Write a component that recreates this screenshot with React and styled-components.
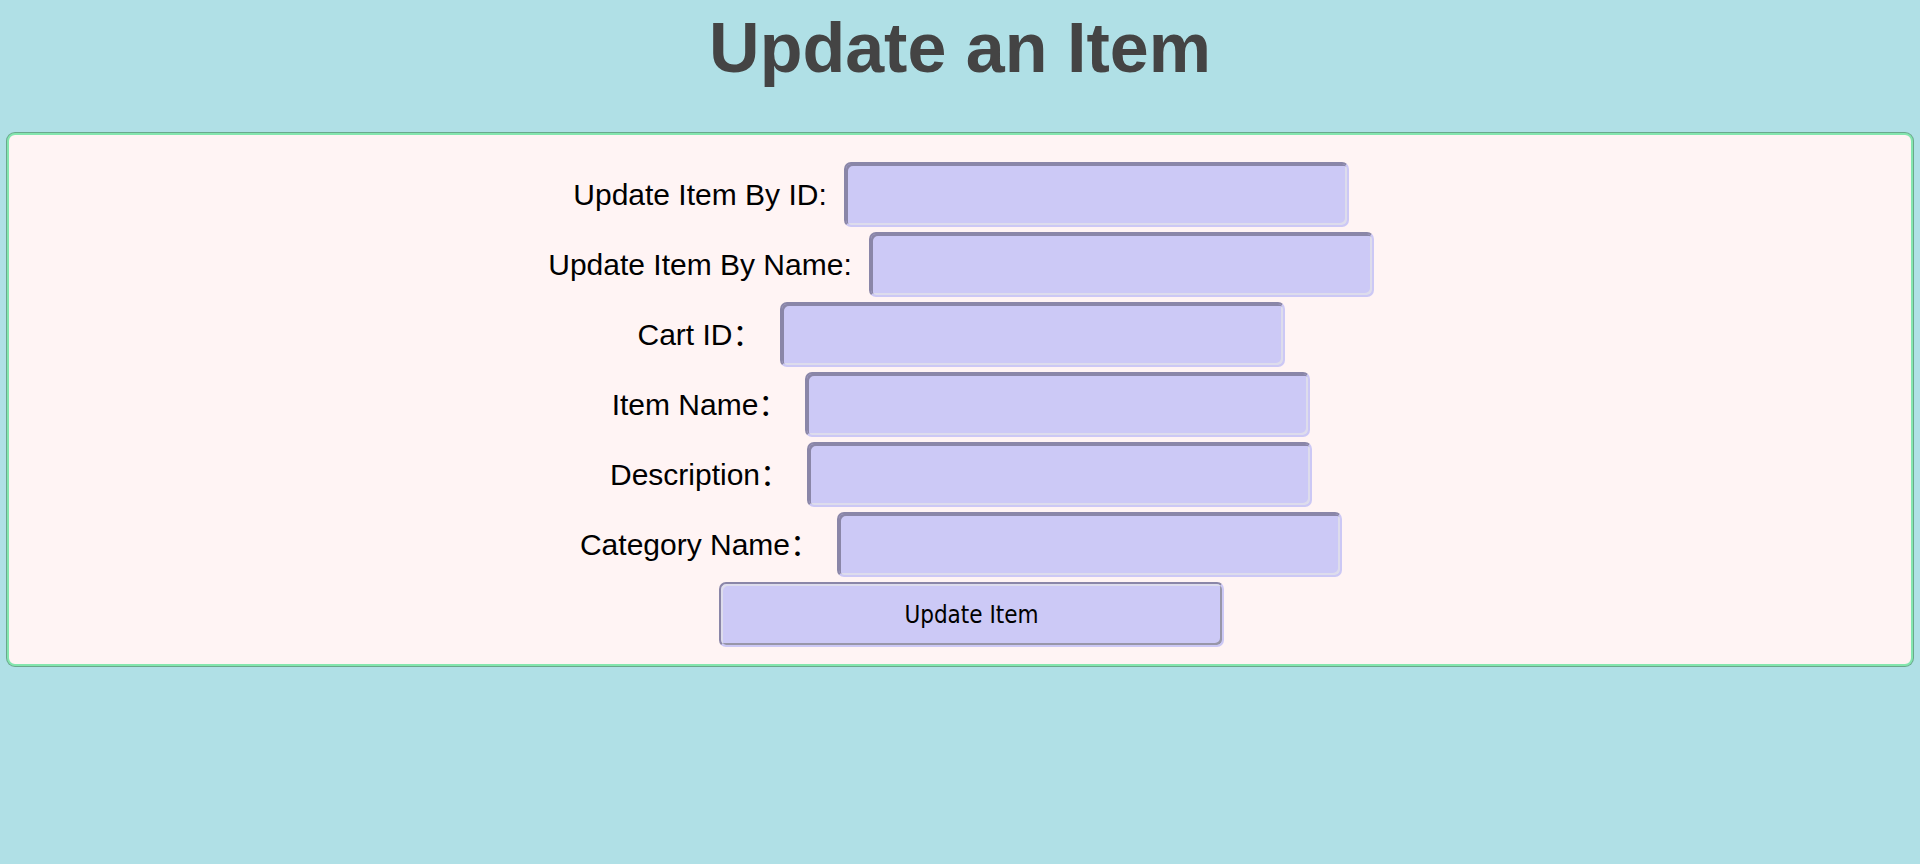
import React, { useState } from "react";
import styled, { createGlobalStyle } from "styled-components";

const GlobalStyle = createGlobalStyle`
  html, body {
    margin: 0;
    padding: 0;
    background: #b0e0e6;
  }
  body {
    font-family: "Liberation Sans", Arial, sans-serif;
  }
`;

const Page = styled.div`
  min-height: 864px;
  padding: 8px 7px 0 7px;
  box-sizing: border-box;
`;

const Title = styled.h1`
  margin: 0 0 45px;
  height: 80px;
  line-height: 80px;
  text-align: center;
  font-size: 70px;
  font-weight: bold;
  color: #444444;
`;

const Panel = styled.form`
  background: #fff4f4;
  border: 2px solid #84e6ae;
  border-radius: 8px;
  box-shadow: 0 0 0 1px #6aa88c;
  padding: 27px 0 17px 2px;
  display: flex;
  flex-direction: column;
  gap: 5px;
`;

const Row = styled.div`
  display: flex;
  justify-content: center;
  align-items: center;
  gap: 17px;
`;

const Label = styled.label`
  font-family: "Liberation Sans", "Noto Sans CJK SC", sans-serif;
  font-size: 30px;
  line-height: 34px;
  color: #000;
  white-space: nowrap;
`;

const ring = `
  width: 505px;
  height: 65px;
  box-sizing: border-box;
  border: 2px solid;
  border-color: #8a86a8 #ccc8f5 #ccc8f5 #8a86a8;
  border-radius: 7px;
  background: #ccc9f6;
  outline: none;
`;

const Field = styled.input`
  ${ring}
  box-shadow: inset 2px 2px 0 #8a86a8, inset -2px -2px 0 #dddcec;
  padding: 0 10px;
  font-size: 24px;
  font-family: "Liberation Sans", sans-serif;
`;

const SubmitButton = styled.button`
  ${ring}
  box-shadow: inset 2px 2px 0 #dddcec, inset -2px -2px 0 #9896a8;
  margin-left: 21px;
  font-family: "DejaVu Sans Condensed", "DejaVu Sans", sans-serif;
  font-stretch: condensed;
  font-size: 24px;
  color: #000;
  cursor: pointer;
`;

const fields = [
  { key: "id", label: "Update Item By ID:" },
  { key: "byName", label: "Update Item By Name:" },
  { key: "cartId", label: "Cart ID：" },
  { key: "name", label: "Item Name：" },
  { key: "description", label: "Description：" },
  { key: "category", label: "Category Name：" },
];

const App = () => {
  const [values, setValues] = useState({});

  const handleChange = (key) => (e) =>
    setValues({ ...values, [key]: e.target.value });

  const handleSubmit = (e) => {
    e.preventDefault();
  };

  return (
    <Page>
      <GlobalStyle />
      <Title>Update an Item</Title>
      <Panel onSubmit={handleSubmit}>
        {fields.map((field) => (
          <Row key={field.key}>
            <Label htmlFor={field.key}>{field.label}</Label>
            <Field
              id={field.key}
              value={values[field.key] || ""}
              onChange={handleChange(field.key)}
            />
          </Row>
        ))}
        <Row>
          <SubmitButton type="submit">Update Item</SubmitButton>
        </Row>
      </Panel>
    </Page>
  );
};

export default App;
